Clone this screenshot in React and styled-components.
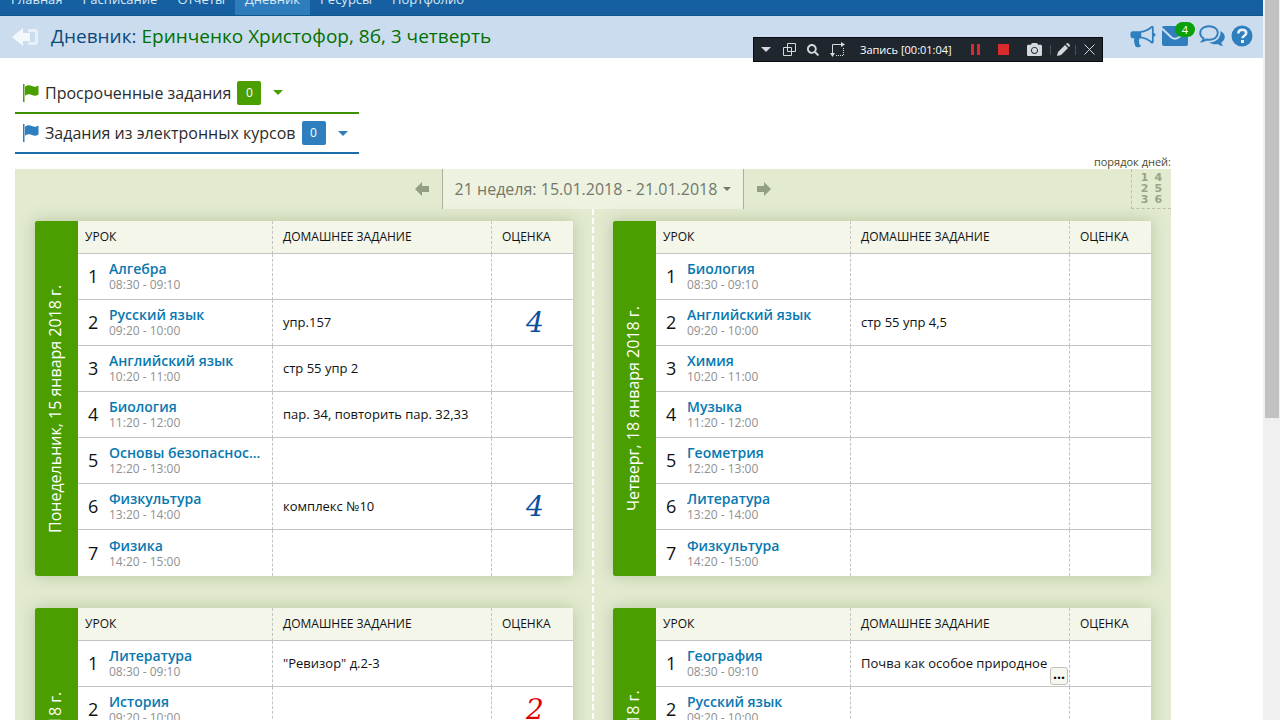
import React from "react";
import styled, { createGlobalStyle } from "styled-components";
import { FaCamera, FaSearch } from "react-icons/fa";

const GlobalStyle = createGlobalStyle`
  * {
    box-sizing: border-box;
  }
  body {
    margin: 0;
    background: #ffffff;
    color: #111111;
    font-family: "Open Sans", "Noto Sans", sans-serif;
    font-size: 13px;
  }
  button {
    font-family: inherit;
    border: none;
    background: none;
    padding: 0;
    cursor: pointer;
  }
  svg {
    display: block;
  }
`;

const Screen = styled.div`
  display: flex;
  height: 100vh;
  overflow: hidden;
`;
const Page = styled.div`
  flex: 1;
  min-width: 0;
`;
const ScrollTrack = styled.div`
  width: 17px;
  padding: 0 1px 0 2px;
  background: #f0f0f0;
`;
const ScrollThumb = styled.div`
  height: 58%;
  background: #c1c1c1;
`;

// top menu, scrolled almost out of view
const Nav = styled.nav`
  display: flex;
  align-items: flex-end;
  height: 16px;
  padding-left: 1px;
  overflow: hidden;
  background: #1660a2;
  border-bottom: 1px solid #0f5590;
`;
const NavLink = styled.a`
  padding: 0 10px 4px;
  color: #d9e8f5;
  font-size: 13px;
  line-height: 24px;
  text-decoration: none;
  background: ${(props) => (props.$active ? "#2f7cbd" : "none")};
`;

const Header = styled.header`
  display: flex;
  align-items: center;
  height: 42px;
  padding: 0 10px 0 12px;
  background: #ccdcef;
`;
const Title = styled.h1`
  flex: 1;
  margin: 0 0 0 12px;
  padding-bottom: 2px;
  color: #0c4a78;
  font-size: 19px;
  font-weight: 400;
  line-height: 28px;
`;
const Pupil = styled.span`
  color: #007000;
`;
const HeaderIcons = styled.div`
  display: flex;
  align-items: center;
  gap: 6px;
  padding-bottom: 2px;
`;
const HeaderButton = styled.button`
  position: relative;
  padding-right: ${(props) => (props.$counted ? 5 : 0)}px;
  color: #2f7fbf;
`;
const MailCount = styled.span`
  position: absolute;
  top: -4px;
  right: -2px;
  width: 20px;
  height: 15px;
  border-radius: 8px;
  background: #0aa00a;
  color: #ffffff;
  font-size: 11px;
  line-height: 15px;
  text-align: center;
`;

const Recorder = styled.div`
  position: fixed;
  top: 37px;
  right: 177px;
  display: flex;
  align-items: center;
  height: 25px;
  padding-left: 6px;
  background: #20262e;
  border: 1px solid #0a0c10;
  color: #d5d8dc;
`;
const RecorderButton = styled.button`
  display: flex;
  justify-content: center;
  width: ${(props) => props.$width}px;
  color: ${(props) => props.$color || "#d5d8dc"};
`;
const RecorderTime = styled.span`
  width: 108px;
  padding-left: 6px;
  color: #ffffff;
  font-size: 11px;
  white-space: nowrap;
`;
const Separator = styled.span`
  width: 1px;
  height: 10px;
  background: #4a5058;
`;

const Main = styled.main`
  margin: 15px 92px 0 15px;
`;
const TaskRow = styled.button`
  display: flex;
  align-items: center;
  width: 344px;
  height: ${(props) => (props.$first ? 41 : 40)}px;
  padding: 0 7px;
  border-bottom: 2px solid ${(props) => props.$line};
  color: ${(props) => props.$color};
`;
const TaskName = styled.span`
  margin: 0 6px;
  color: #2b2b2b;
  font-size: 16px;
  line-height: 24px;
`;
const TaskCount = styled.span`
  width: 24px;
  height: 24px;
  margin-right: 12px;
  border-radius: 2px;
  background: ${(props) => props.$color};
  color: #ffffff;
  font-size: 12px;
  line-height: 24px;
`;
const Caret = styled.span`
  border: ${(props) => props.$size || 5}px solid transparent;
  border-top-color: currentColor;
  border-bottom: none;
`;

const OrderLabel = styled.div`
  color: #4b4b2a;
  font-size: 11px;
  line-height: 15px;
  text-align: right;
`;
const Board = styled.section`
  background: #e2ead0;
`;
const WeekBar = styled.div`
  display: grid;
  grid-template-columns: 1fr auto 1fr;
  height: 40px;
`;
const WeekPicker = styled.div`
  grid-column: 2;
  display: flex;
  align-items: center;
  gap: 13px;
`;
const WeekArrow = styled.button`
  color: #929f80;
`;
const WeekButton = styled.button`
  display: flex;
  align-items: center;
  justify-content: center;
  gap: 6px;
  width: 302px;
  height: 40px;
  border-left: 1px solid #a9b09c;
  border-right: 1px solid #a9b09c;
  background: #eef2e1;
  color: #73786a;
  font-size: 16px;
`;
const OrderButton = styled.button`
  justify-self: end;
  display: grid;
  grid-template-columns: auto auto;
  align-content: center;
  justify-content: center;
  column-gap: 6px;
  width: 40px;
  height: 40px;
  border-left: 1px dashed #b9c1a8;
  border-bottom: 1px dashed #b9c1a8;
  color: #98a584;
  font-family: "DejaVu Sans", sans-serif;
  font-size: 11px;
  font-weight: 700;
  line-height: 11px;
`;
const Days = styled.div`
  display: grid;
  grid-template-columns: 1fr 1fr;
  gap: 32px 40px;
  padding: 12px 20px 32px;
  background: repeating-linear-gradient(#ffffff 0 6px, transparent 6px 9px)
    center / 2px 100% no-repeat;
`;

const DayCard = styled.article`
  display: flex;
  align-items: stretch;
  min-height: 355px;
  border-radius: 2px;
  overflow: hidden;
  background: #ffffff;
  box-shadow: 0 0 16px rgba(120, 145, 80, 0.4);
`;
const DayName = styled.h2`
  display: flex;
  align-items: center;
  justify-content: center;
  flex: none;
  width: 43px;
  margin: 0;
  padding: 0 0 20px 4px;
  background: #4a9e00;
  color: #ffffff;
  font-size: 16px;
  font-weight: 400;
  white-space: nowrap;
  writing-mode: vertical-rl;
  transform: rotate(180deg);
`;
const Lessons = styled.table`
  flex: 1;
  align-self: flex-start;
  width: 100%;
  table-layout: fixed;
  border-spacing: 0;
`;
const Col = styled.col`
  width: ${(props) => (props.$width ? props.$width + "px" : "auto")};
`;
const HeadCell = styled.th`
  height: 33px;
  padding: 0 0 2px ${(props) => (props.$divided ? 10 : 7)}px;
  background: #f4f6ea;
  border-bottom: 1px solid #c3c3c3;
  border-left: ${(props) => (props.$divided ? "1px dashed #c3c3c3" : "none")};
  font-size: 12px;
  font-weight: 500;
  text-align: left;
`;
const Cell = styled.td`
  position: relative;
  height: 46px;
  padding: 0 0 1px ${(props) => (props.$divided ? 10 : 0)}px;
  border-bottom: 1px solid #c3c3c3;
  border-left: ${(props) => (props.$divided ? "1px dashed #c3c3c3" : "none")};
  white-space: nowrap;
  tr:nth-child(7) > & {
    border-bottom: none;
  }
`;
const NumberCell = styled(Cell)`
  padding-left: 10px;
  font-size: 18px;
`;
const MarkCell = styled(Cell)`
  padding: 0 0 0 5px;
  color: ${(props) => (props.$bad ? "#e00000" : "#0a50a0")};
  font-family: "DejaVu Serif", serif;
  font-size: 28px;
  font-style: italic;
  line-height: 32px;
  text-align: center;
`;
const Subject = styled.a`
  display: block;
  overflow: hidden;
  color: #0878b0;
  font-size: 14px;
  font-weight: 600;
  line-height: 17px;
  text-decoration: none;
`;
const Time = styled.div`
  color: #909090;
  font-size: 12px;
  line-height: 15px;
`;
const MoreButton = styled.button`
  position: absolute;
  right: 1px;
  bottom: 1px;
  width: 18px;
  height: 18px;
  border: 1px solid #c0c0b8;
  border-radius: 3px;
  background: #f6f7ee;
  font-size: 14px;
  font-weight: 700;
  line-height: 8px;
  padding-bottom: 4px;
`;

const days = [
  {
    name: "Понедельник, 15 января 2018 г.",
    lessons: [
      { subject: "Алгебра", time: "08:30 - 09:10" },
      { subject: "Русский язык", time: "09:20 - 10:00", homework: "упр.157", mark: 4 },
      { subject: "Английский язык", time: "10:20 - 11:00", homework: "стр 55 упр 2" },
      { subject: "Биология", time: "11:20 - 12:00", homework: "пар. 34, повторить пар. 32,33" },
      { subject: "Основы безопаснос...", time: "12:20 - 13:00" },
      { subject: "Физкультура", time: "13:20 - 14:00", homework: "комплекс №10", mark: 4 },
      { subject: "Физика", time: "14:20 - 15:00" },
    ],
  },
  {
    name: "Четверг, 18 января 2018 г.",
    lessons: [
      { subject: "Биология", time: "08:30 - 09:10" },
      { subject: "Английский язык", time: "09:20 - 10:00", homework: "стр 55 упр 4,5" },
      { subject: "Химия", time: "10:20 - 11:00" },
      { subject: "Музыка", time: "11:20 - 12:00" },
      { subject: "Геометрия", time: "12:20 - 13:00" },
      { subject: "Литература", time: "13:20 - 14:00" },
      { subject: "Физкультура", time: "14:20 - 15:00" },
    ],
  },
  {
    name: "Вторник, 16 января 2018 г.",
    lessons: [
      { subject: "Литература", time: "08:30 - 09:10", homework: '"Ревизор" д.2-3' },
      { subject: "История", time: "09:20 - 10:00", mark: 2 },
    ],
  },
  {
    name: "Пятница, 19 января 2018 г.",
    lessons: [
      { subject: "География", time: "08:30 - 09:10", homework: "Почва как особое природное", more: true },
      { subject: "Русский язык", time: "09:20 - 10:00" },
    ],
  },
];

const menu = ["Главная", "Расписание", "Отчеты", "Дневник", "Ресурсы", "Портфолио"];

// column by column: 1-3 on the left, 4-6 on the right
const dayOrder = [1, 4, 2, 5, 3, 6];

const BackIcon = () => (
  <svg width="27" height="20" viewBox="0 0 27 20">
    <path d="M0 10 11 1v5h7v8h-7v5z" fill="#f3f8fd" />
    <path d="M16 2h7q3 0 3 3v10q0 3-3 3h-7v-3h6q1 0 1-1V6q0-1-1-1h-6z" fill="#e6effa" />
  </svg>
);

const FlagIcon = () => (
  <svg width="17" height="18" viewBox="0 0 17 18" fill="currentColor">
    <path d="M1 0h1.500v18H1z" />
    <path d="M3 2.500c3-2 5-1.500 7-.5s4 1 6.500-.5v9c-2.500 1.500-4.500 1.500-6.500.5s-4-1.200-7 .8z" />
  </svg>
);

const BullhornIcon = () => (
  <svg width="26" height="25" viewBox="0 0 1792 1792" fill="currentColor">
    <path d="M1664 640q53 0 90.5 37.5t37.5 90.5-37.5 90.5-90.5 37.5v384q0 52-38 90t-90 38q-417-347-812-380-58 19-91 66t-31 100.5 40 92.5q-20 33-23 65.5t6 58 33.5 55 48 50 61.5 50.5q-29 58-111.5 83t-168.5 11.5-132-55.5q-7-23-29.5-87.5t-32-94.5-23-89-15-101 3.5-98.5 22-110.5h-122q-66 0-113-47t-47-113v-192q0-66 47-113t113-47h480q435 0 896-384 52 0 90 38t38 90v384zm-128 604v-954q-394 302-768 343v270q377 42 768 341z" />
  </svg>
);

const MailIcon = () => (
  <svg width="26" height="20" viewBox="0 0 26 20">
    <rect width="26" height="20" rx="2" fill="currentColor" />
    <path d="M0 2.500l9.500 9q3.500 2.500 7 0l9.500-6" fill="none" stroke="#ccdcef" strokeWidth="2" />
  </svg>
);

const ChatIcon = () => (
  <svg width="26" height="22" viewBox="0 0 26 22">
    <path d="M10 1.200c5 0 8.800 2.800 8.800 6.800s-3.800 6.800-8.800 6.800q-1.500 0-2.800-.3-1.700 1.300-3.900 1.700 1-1.200 1.300-2.800C2.400 12.200 1.200 10.200 1.200 8c0-4 3.800-6.800 8.800-6.800z" fill="none" stroke="currentColor" strokeWidth="1.900" />
    <path d="M21.500 6c2.600 1.300 4.300 3.500 4.300 6 0 2.200-1.400 4.200-3.600 5.500.3 1.500 1 2.600 2 3.500-2.200-.1-4-.8-5.500-2-3 .5-6.200 0-8.500-1.600 6.500 0 11.800-3.700 11.300-11.400z" fill="currentColor" />
  </svg>
);

const HelpIcon = () => (
  <svg width="22" height="22" viewBox="0 0 22 22">
    <circle cx="11" cy="11" r="10.500" fill="currentColor" />
    <path d="M7.200 8.500c.2-2.400 1.600-3.700 4-3.700 2.300 0 4 1.300 4 3.300 0 2.600-3.700 2.700-3.700 5.100" fill="none" stroke="#e6effa" strokeWidth="2.600" />
    <rect x="10" y="15" width="3" height="3" fill="#e6effa" />
  </svg>
);

const WindowsIcon = () => (
  <svg width="13" height="13" viewBox="0 0 13 13" fill="none" stroke="currentColor">
    <path d="M4.500.5h8v8h-8zM.5 4.500h8v8h-8z" />
  </svg>
);

const RegionIcon = () => (
  <svg width="15" height="15" viewBox="0 0 15 15" fill="none" stroke="currentColor">
    <path d="M11 2.500H2.500V12" />
    <path d="M11 0l4 2.500L11 5zM0 11h5l-2.500 4z" fill="currentColor" stroke="none" />
    <path d="M13.500 6v7.500H6" strokeDasharray="1 1" />
  </svg>
);

const PencilIcon = () => (
  <svg width="13" height="13" viewBox="0 0 13 13" fill="currentColor">
    <path d="M0 13l1-4 7-7 3 3-7 7zM9 1l1-1q1 0 2 1t1 2l-1 1z" />
  </svg>
);

const CloseIcon = () => (
  <svg width="11" height="11" viewBox="0 0 11 11" stroke="currentColor">
    <path d="M.5.5l10 10M10.500.5l-10 10" />
  </svg>
);

const ArrowIcon = ({ right }) => (
  <svg width="14" height="14" viewBox="0 0 14 14" fill="currentColor">
    <path d={right ? "M14 7 7 0v4H0v6h7v4z" : "M0 7l7-7v4h7v6H7v4z"} />
  </svg>
);

const Day = ({ day }) => (
  <DayCard>
    <DayName>{day.name}</DayName>
    <Lessons>
      <colgroup>
        <Col $width={31} />
        <Col />
        <Col $width={219} />
        <Col $width={82} />
      </colgroup>
      <thead>
        <tr>
          <HeadCell colSpan={2}>УРОК</HeadCell>
          <HeadCell $divided>ДОМАШНЕЕ ЗАДАНИЕ</HeadCell>
          <HeadCell $divided>ОЦЕНКА</HeadCell>
        </tr>
      </thead>
      <tbody>
        {day.lessons.map((lesson, index) => (
          <tr key={lesson.time}>
            <NumberCell>{index + 1}</NumberCell>
            <Cell>
              <Subject href="#">{lesson.subject}</Subject>
              <Time>{lesson.time}</Time>
            </Cell>
            <Cell $divided>
              {lesson.homework}
              {lesson.more && <MoreButton>...</MoreButton>}
            </Cell>
            <MarkCell $divided $bad={lesson.mark === 2}>
              {lesson.mark}
            </MarkCell>
          </tr>
        ))}
      </tbody>
    </Lessons>
  </DayCard>
);

const App = () => {
  return (
    <Screen>
      <GlobalStyle />
      <Page>
        <Nav>
          {menu.map((item) => (
            <NavLink key={item} href="#" $active={item === "Дневник"}>
              {item}
            </NavLink>
          ))}
        </Nav>
        <Header>
          <HeaderButton aria-label="Назад">
            <BackIcon />
          </HeaderButton>
          <Title>
            Дневник: <Pupil>Еринченко Христофор, 8б, 3 четверть</Pupil>
          </Title>
          <HeaderIcons>
            <HeaderButton aria-label="Объявления">
              <BullhornIcon />
            </HeaderButton>
            <HeaderButton $counted aria-label="Почта">
              <MailIcon />
              <MailCount>4</MailCount>
            </HeaderButton>
            <HeaderButton aria-label="Форум">
              <ChatIcon />
            </HeaderButton>
            <HeaderButton aria-label="Помощь">
              <HelpIcon />
            </HeaderButton>
          </HeaderIcons>
        </Header>
        <Main>
          <TaskRow $first $color="#4a9e00" $line="#3f9000">
            <FlagIcon />
            <TaskName>Просроченные задания</TaskName>
            <TaskCount $color="#4a9e00">0</TaskCount>
            <Caret />
          </TaskRow>
          <TaskRow $color="#2f7fbf" $line="#1a6cab">
            <FlagIcon />
            <TaskName>Задания из электронных курсов</TaskName>
            <TaskCount $color="#2f7fbf">0</TaskCount>
            <Caret />
          </TaskRow>
          <OrderLabel>порядок дней:</OrderLabel>
          <Board>
            <WeekBar>
              <WeekPicker>
                <WeekArrow aria-label="Предыдущая неделя">
                  <ArrowIcon />
                </WeekArrow>
                <WeekButton>
                  21 неделя: 15.01.2018 - 21.01.2018
                  <Caret $size={4} />
                </WeekButton>
                <WeekArrow aria-label="Следующая неделя">
                  <ArrowIcon right />
                </WeekArrow>
              </WeekPicker>
              <OrderButton>
                {dayOrder.map((number) => (
                  <span key={number}>{number}</span>
                ))}
              </OrderButton>
            </WeekBar>
            <Days>
              {days.map((day) => (
                <Day key={day.name} day={day} />
              ))}
            </Days>
          </Board>
        </Main>
      </Page>
      <ScrollTrack>
        <ScrollThumb />
      </ScrollTrack>
      <Recorder>
        <RecorderButton $width={12} aria-label="Меню">
          <Caret />
        </RecorderButton>
        <RecorderButton $width={34} aria-label="Окно">
          <WindowsIcon />
        </RecorderButton>
        <RecorderButton $width={14} aria-label="Лупа">
          <FaSearch size={12} />
        </RecorderButton>
        <RecorderButton $width={34} aria-label="Область">
          <RegionIcon />
        </RecorderButton>
        <RecorderTime>Запись [00:01:04]</RecorderTime>
        <RecorderButton $width={26} $color="#d92b2b" aria-label="Пауза">
          <svg width="9" height="11" fill="currentColor">
            <path d="M0 0h3v11H0zM6 0h3v11H6z" />
          </svg>
        </RecorderButton>
        <RecorderButton $width={30} $color="#d92b2b" aria-label="Стоп">
          <svg width="11" height="11" fill="currentColor">
            <path d="M0 0h11v11H0z" />
          </svg>
        </RecorderButton>
        <RecorderButton $width={32} aria-label="Снимок">
          <FaCamera size={15} />
        </RecorderButton>
        <Separator />
        <RecorderButton $width={24} aria-label="Рисование">
          <PencilIcon />
        </RecorderButton>
        <Separator />
        <RecorderButton $width={26} aria-label="Закрыть">
          <CloseIcon />
        </RecorderButton>
      </Recorder>
    </Screen>
  );
};

export default App;
